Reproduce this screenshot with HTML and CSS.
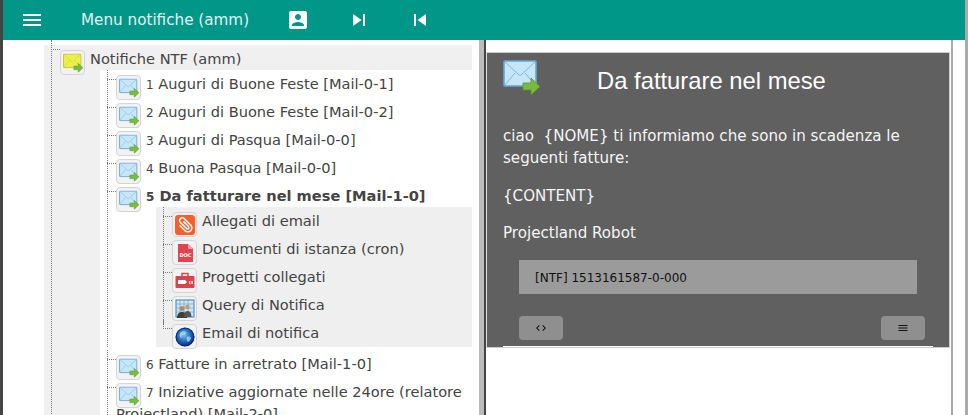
FILE: index.html
```html
<!DOCTYPE html>
<html lang="it">
<head>
<meta charset="utf-8">
<title>Menu notifiche</title>
<link rel="stylesheet" href="styles.css">
</head>
<body>
<svg class="defs" width="0" height="0" aria-hidden="true">
  <symbol id="mail" viewBox="0 0 37 35">
    <rect x="1" y="1" width="32" height="25" rx="1" fill="var(--env-fill)" stroke="var(--env-line)" stroke-width="1.600"/>
    <path d="M2 2l13 12 2 1.500 2-1.500L32 2M2 25l10-12M32 25L22 13" fill="none" stroke="var(--env-line)" stroke-width="1" opacity=".75"/>
    <path d="M20 23h8v-5l9 8.500-9 8.500v-5h-8z" fill="#78bb3f" stroke="#55962c" stroke-width=".8"/>
  </symbol>
</svg>

<header class="topbar">
  <svg class="tb-icon" viewBox="0 0 24 24"><path d="M3 18h18v-2H3v2zm0-5h18v-2H3v2zm0-7v2h18V6H3z"/></svg>
  <span class="tb-title">Menu notifiche (amm)</span>
  <svg class="tb-icon" viewBox="0 0 24 24"><path d="M3 5v14c0 1.100.89 2 2 2h14c1.100 0 2-.9 2-2V5c0-1.100-.9-2-2-2H5c-1.110 0-2 .9-2 2zm12 4c0 1.660-1.340 3-3 3s-3-1.340-3-3 1.340-3 3-3 3 1.340 3 3zm-9 8c0-2 4-3.100 6-3.100s6 1.100 6 3.100v1H6v-1z"/></svg>
  <svg class="tb-icon" viewBox="0 0 24 24"><path d="M6 18l8.500-6L6 6v12zM16 6v12h2V6h-2z"/></svg>
  <svg class="tb-icon" viewBox="0 0 24 24"><path d="M6 6h2v12H6zm3.500 6l8.500 6V6z"/></svg>
</header>

<main class="split">
  <nav class="tree-pane">
    <ul class="tree root">
      <li class="node">
        <span class="ico yellow"><svg viewBox="0 0 37 35"><use href="#mail"/></svg></span>
        <span class="label">Notifiche NTF (amm)</span>
        <ul class="tree kids">
          <li class="node"><span class="ico"><svg viewBox="0 0 37 35"><use href="#mail"/></svg></span><span class="label"><small>1</small> Auguri di Buone Feste [Mail-0-1]</span></li>
          <li class="node"><span class="ico"><svg viewBox="0 0 37 35"><use href="#mail"/></svg></span><span class="label"><small>2</small> Auguri di Buone Feste [Mail-0-2]</span></li>
          <li class="node"><span class="ico"><svg viewBox="0 0 37 35"><use href="#mail"/></svg></span><span class="label"><small>3</small> Auguri di Pasqua [Mail-0-0]</span></li>
          <li class="node"><span class="ico"><svg viewBox="0 0 37 35"><use href="#mail"/></svg></span><span class="label"><small>4</small> Buona Pasqua [Mail-0-0]</span></li>
          <li class="node open">
            <span class="ico"><svg viewBox="0 0 37 35"><use href="#mail"/></svg></span>
            <span class="label selected"><small>5</small> Da fatturare nel mese [Mail-1-0]</span>
            <ul class="tree subs">
              <li class="node"><span class="ico">
                <svg viewBox="0 0 20 20"><rect x="0" y="0" width="20" height="20" rx="3" fill="#fa5f2a"/><path d="M6 7v7a4 4 0 0 0 8 0V5a2.700 2.700 0 0 0-5.400 0v8.500a1.400 1.400 0 0 0 2.800 0V7" fill="none" stroke="#fff" stroke-width="1.500" stroke-linecap="round" transform="rotate(-45 10 10)"/></svg>
              </span><span class="label">Allegati di email</span></li>
              <li class="node"><span class="ico">
                <svg viewBox="0 0 20 20"><path d="M3 1h10l5 5v13H3z" fill="#e2434f"/><path d="M13 1l5 5h-5z" fill="#f3a2a8"/><text x="10.500" y="13.500" class="doc-text">DOC</text></svg>
              </span><span class="label">Documenti di istanza (cron)</span></li>
              <li class="node"><span class="ico">
                <svg viewBox="0 0 20 20"><path d="M7 5V2.500h6V5" fill="none" stroke="#d8434c" stroke-width="1.500"/><rect x="0.500" y="5" width="19" height="12" rx="1" fill="#d8434c"/><path d="M3 9h7l2 2-2 2H3z" fill="#fff"/><rect x="14" y="10" width="1.300" height="3" fill="#fff"/><rect x="16.500" y="10" width="1.300" height="3" fill="#fff"/></svg>
              </span><span class="label">Progetti collegati</span></li>
              <li class="node"><span class="ico">
                <svg viewBox="0 0 20 20"><rect x="1" y="1" width="18" height="17" fill="#cfe6f5" stroke="#3b7fae"/><path d="M1 5h18M1 9h18M1 13h18M5 1v17M9 1v17M13 1v17" stroke="#6fa5c8" stroke-width=".7"/><circle cx="7" cy="9.500" r="2.500" fill="#b98a63"/><path d="M2 19c0-4 2-6 5-6s5 2 5 6z" fill="#3d3d3d"/><circle cx="12.500" cy="8" r="2.300" fill="#c99a70"/><path d="M9 18c0-4 1-6 3.500-6s4 2 4 6z" fill="#555"/></svg>
              </span><span class="label">Query di Notifica</span></li>
              <li class="node"><span class="ico">
                <svg viewBox="0 0 20 20"><defs><radialGradient id="globe" cx=".45" cy=".4" r=".6"><stop offset="0" stop-color="#7cc3ec"/><stop offset=".6" stop-color="#1f62b8"/><stop offset="1" stop-color="#0b2a78"/></radialGradient></defs><circle cx="10" cy="10" r="9.500" fill="url(#globe)"/><path d="M5 6c2-2 5-2 6-1s-1 3-3 3-1 3-2 3-2-3-1-5zM12 10c2-1 4 0 4 1s-2 4-3 4-2-4-1-5z" fill="#a9dcf4" opacity=".75"/><circle cx="10" cy="10" r="8.800" fill="none" stroke="#0a2a80" stroke-width="1"/></svg>
              </span><span class="label">Email di notifica</span></li>
            </ul>
          </li>
          <li class="node"><span class="ico"><svg viewBox="0 0 37 35"><use href="#mail"/></svg></span><span class="label"><small>6</small> Fatture in arretrato [Mail-1-0]</span></li>
          <li class="node long"><span class="ico"><svg viewBox="0 0 37 35"><use href="#mail"/></svg></span><span class="label"><small>7</small> Iniziative aggiornate nelle 24ore (relatore Projectland) [Mail-2-0]</span></li>
        </ul>
      </li>
    </ul>
  </nav>

  <div class="gutter"></div>

  <section class="preview">
    <article class="card">
      <div class="card-inner">
        <div class="card-head">
          <svg class="card-icon" viewBox="0 0 37 35"><use href="#mail"/></svg>
          <h1>Da fatturare nel mese</h1>
        </div>
        <p class="intro">ciao &nbsp;{NOME} ti informiamo che sono in scadenza le seguenti fatture:</p>
        <p class="content">{CONTENT}</p>
        <p class="sign">Projectland Robot</p>
        <div class="code">[NTF] 1513161587-0-000</div>
        <div class="actions">
          <button class="btn" type="button"><svg viewBox="0 0 24 24"><path d="M9.400 16.600L4.800 12l4.600-4.600L8 6l-6 6 6 6 1.400-1.400zm5.200 0l4.600-4.600-4.600-4.600L16 6l6 6-6 6-1.400-1.400z"/></svg></button>
          <button class="btn" type="button"><svg viewBox="0 0 24 24"><path d="M3 18h18v-2H3v2zm0-5h18v-2H3v2zm0-7v2h18V6H3z"/></svg></button>
        </div>
      </div>
    </article>
  </section>
</main>
</body>
</html>
```
FILE: styles.css
```css
* { box-sizing: border-box; }
html, body { margin: 0; height: 415px; overflow: hidden; }
body {
  display: flex;
  flex-direction: column;
  background: #fff;
  border-left: 3px solid #444;
  border-right: 3px solid #aaa;
  font-family: "DejaVu Sans", sans-serif;
  color: #444;
  --env-fill: #c6e6fb;
  --env-line: #6aa5cf;
}
.defs { display: block; height: 0; }

.topbar {
  flex: none;
  height: 40px;
  display: flex;
  align-items: center;
  gap: 37px;
  padding-left: 17px;
  background: #009688;
  color: #e0f2f1;
}
.tb-icon { width: 24px; height: 24px; fill: #fff; flex: none; }
.tb-title { font-size: 15.2px; line-height: 38px; white-space: nowrap; width: 168px; }

.split { flex: 1; display: flex; min-height: 0; }

.tree-pane {
  flex: none;
  width: 476px;
  overflow: hidden;
  padding: 5px 7px 0 41px;
}
.tree { list-style: none; margin: 0; padding: 0 0 0 16px; }
.root { background: #f0f0f0; }
.kids, .subs { margin-left: 40px; padding-top: 5px; padding-bottom: 3px; }
.kids { background: #fff; }
.subs { background: #efefef; margin-bottom: 8px; }
.root > .node { padding-top: 5px; }
.kids > .node { min-height: 28px; }
.node { position: relative; line-height: 20px; font-size: 14.6px; }
.node::before {
  content: "";
  position: absolute;
  left: -9px;
  top: 4px;
  width: 9px;
  border-top: 1px dotted #777;
}
.node::after {
  content: "";
  position: absolute;
  left: -9px;
  top: -5px;
  bottom: 0;
  border-left: 1px dotted #777;
}
.subs > .node { height: 28px; }
.subs > .node:last-child { height: 20px; }
.subs > .node:last-child::after { bottom: 15px; }

.ico {
  float: left;
  width: 25px;
  height: 25px;
  margin: 0 5px -5px 0;
  padding: 1px;
  display: flex;
  align-items: center;
  justify-content: center;
  background: #f2f2f2;
  border: 1px solid #d4d4d4;
  border-radius: 4px;
}
.ico svg { width: 20px; height: 20px; display: block; }
.yellow { --env-fill: #eef04a; --env-line: #c4c32c; }
.label { color: #444; line-height: 18px; vertical-align: 1px; }
.label small { font-size: 12px; line-height: 0; }
.selected { font-weight: 700; }
.long { line-height: 22px; }
.long .ico { margin-bottom: -3px; }
.long .label { vertical-align: 2px; }
.doc-text { font: 700 5px "DejaVu Sans", sans-serif; fill: #fff; text-anchor: middle; }

.gutter {
  flex: none;
  width: 7px;
  background: #bbb;
  border-right: 2px solid #444;
}

.preview {
  flex: none;
  width: 467px;
  border-right: 2px solid #aaa;
  padding: 12px 1px 0 0;
}
.card {
  height: 296px;
  background: #606060;
  border: 1px solid #ccc;
  border-left-color: #ddd;
  padding: 0 16px;
  color: #f5f5f5;
}
.card-inner { height: 294px; border-bottom: 1px solid #fff; }
.card-head { display: flex; align-items: flex-start; padding-top: 7px; }
.card-icon { width: 37px; height: 35px; flex: none; }
h1 {
  margin: 0 0 0 57px;
  font: 400 23.8px/28px "Liberation Sans", Arial, sans-serif;
  color: #fff;
  padding-top: 7px;
}
.intro, .content, .sign { margin: 0; font-size: 15.1px; line-height: 22px; }
.intro { margin-top: 30px; }
.content { margin-top: 16px; }
.sign { margin-top: 15px; }
.code {
  width: 398px;
  height: 34px;
  margin: 16px 0 0 16px;
  padding-left: 16px;
  background: #9b9b9b;
  color: #111;
  font-size: 12px;
  line-height: 36px;
}
.actions {
  display: flex;
  justify-content: space-between;
  width: 406px;
  margin: 22px 0 0 16px;
}
.btn {
  width: 44px;
  height: 24px;
  padding: 0;
  border: 0;
  border-radius: 4px;
  background: #8f8f8f;
  display: flex;
  align-items: center;
  justify-content: center;
}
.btn svg { width: 12px; height: 12px; fill: #111; display: block; }
```
